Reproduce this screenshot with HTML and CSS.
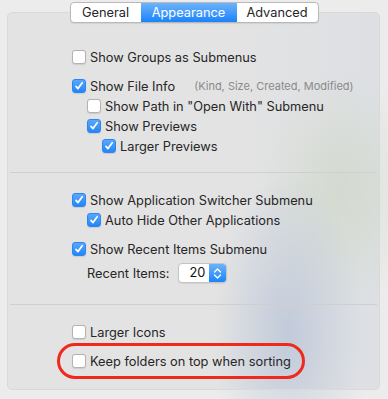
FILE: index.html
```html
<!DOCTYPE html>
<html lang="en">
<head>
  <meta charset="UTF-8">
  <title>Appearance</title>
  <link rel="stylesheet" href="styles.css">
</head>
<body>
  <div class="window">
    <div class="tabs">
      <div class="tab">General</div>
      <div class="tab active">Appearance</div>
      <div class="tab">Advanced</div>
    </div>

    <div class="panel">
      <div class="section first">
        <div class="row gap">
          <span class="box"></span>Show Groups as Submenus
        </div>
        <div class="row">
          <span class="box on"></span>Show File Info
          <span class="hint">(Kind, Size, Created, Modified)</span>
        </div>
        <div class="row lvl1">
          <span class="box"></span>Show Path in "Open With" Submenu
        </div>
        <div class="row lvl1">
          <span class="box on"></span>Show Previews
        </div>
        <div class="row lvl2">
          <span class="box on"></span>Larger Previews
        </div>
      </div>

      <div class="sep"></div>

      <div class="section middle">
        <div class="row">
          <span class="box on"></span>Show Application Switcher Submenu
        </div>
        <div class="row lvl1 gap">
          <span class="box on"></span>Auto Hide Other Applications
        </div>
        <div class="row small-gap">
          <span class="box on"></span>Show Recent Items Submenu
        </div>
        <div class="row lvl1">
          <span class="label">Recent Items:</span>
          <div class="popup">
            <span class="value">20</span>
            <span class="arrows">
              <svg width="9" height="13" viewBox="0 0 9 13">
                <path d="M1.5 5 L4.5 2 L7.5 5 M1.5 8 L4.5 11 L7.5 8" fill="none" stroke="#fff" stroke-width="1.4" stroke-linecap="round" stroke-linejoin="round"/>
              </svg>
            </span>
          </div>
        </div>
      </div>

      <div class="sep"></div>

      <div class="section last">
        <div class="row gap">
          <span class="box"></span>Larger Icons
        </div>
        <div class="row circled">
          <span class="box"></span>Keep folders on top when sorting
          <span class="ring"></span>
        </div>
      </div>
    </div>
  </div>
</body>
</html>
```

FILE: styles.css
```css
* {
  box-sizing: border-box;
}
body {
  margin: 0;
  width: 388px;
  height: 399px;
  font-family: Inter, "Noto Sans", sans-serif;
  font-size: 12.8px;
  color: #262626;
  background:
    radial-gradient(ellipse 80px 170px at 290px 335px, rgba(185,197,217,0.6), rgba(185,197,217,0) 100%),
    radial-gradient(ellipse 90px 120px at 340px 190px, rgba(205,214,196,0.5), rgba(205,214,196,0) 100%),
    #ececec;
  overflow: hidden;
}
.window {
  padding-top: 2px;
}
.tabs {
  display: flex;
  width: 249px;
  height: 21px;
  margin: 0 auto -11px;
  position: relative;
  z-index: 1;
  background: #fff;
  border: 1px solid #b9b9b9;
  border-radius: 4px;
  box-shadow: 0 1px 1px rgba(0,0,0,0.08);
  overflow: hidden;
}
.tab {
  display: flex;
  align-items: center;
  justify-content: center;
  height: 100%;
  border-left: 1px solid #c8c8c8;
}
.tab:nth-child(1) {
  width: 70px;
  border-left: none;
}
.tab:nth-child(2) {
  width: 96px;
}
.tab:nth-child(3) {
  flex: 1;
}
.tab.active {
  color: #fff;
  border-left: none;
  background: linear-gradient(#6db3fb, #1b83fb);
}
.tab.active + .tab {
  border-left: none;
}
.panel {
  margin: 0 8px 0 7px;
  height: 378px;
  border: 1px solid #d9d9d9;
  border-radius: 5px;
  background:
    radial-gradient(ellipse 75px 160px at 280px 320px, rgba(180,193,214,0.7), rgba(180,193,214,0) 100%),
    radial-gradient(ellipse 80px 120px at 332px 178px, rgba(206,214,196,0.65), rgba(206,214,196,0) 100%),
    linear-gradient(90deg, rgba(227,227,227,0) 60%, rgba(215,220,228,0.5) 100%),
    #e3e3e3;
}
.section {
  padding: 17px 0 16px 64px;
}
.section.first {
  padding-top: 34px;
}
.section.middle {
  padding-bottom: 21px;
}
.section.last {
  padding-bottom: 0;
}
.sep {
  height: 1px;
  margin: 0 2px;
  background: #cfcfcf;
}
.row {
  display: flex;
  align-items: center;
  height: 20px;
  white-space: nowrap;
  position: relative;
}
.row.gap {
  margin-bottom: 9px;
}
.row.small-gap {
  margin-bottom: 4px;
}
.lvl1 {
  padding-left: 15px;
}
.lvl2 {
  padding-left: 30px;
}
.box {
  width: 14px;
  height: 14px;
  margin-right: 4px;
  flex: none;
  border: 1px solid #b3b3b3;
  border-radius: 3px;
  background: #fff;
  box-shadow: 0 0.5px 1px rgba(0,0,0,0.1);
}
.box.on {
  border-color: #2b86f2;
  background:
    url("data:image/svg+xml,%3Csvg xmlns='http://www.w3.org/2000/svg' width='12' height='12' viewBox='0 0 12 12'%3E%3Cpath d='M3 6.4 L5 8.6 L9.2 2.8' fill='none' stroke='white' stroke-width='1.7' stroke-linecap='round' stroke-linejoin='round'/%3E%3C/svg%3E") center / 12px 12px no-repeat,
    linear-gradient(#5aa8fb, #2585f7);
}
.hint {
  margin-left: 19px;
  font-size: 11px;
  color: #8a8a8a;
}
.label {
  margin-right: 9px;
}
.popup {
  display: flex;
  height: 20px;
  width: 49px;
  border: 1px solid #c4c4c4;
  border-radius: 4px;
  background: #fff;
  overflow: hidden;
  box-shadow: 0 1px 1px rgba(0,0,0,0.08);
}
.popup .value {
  flex: 1;
  padding-left: 10px;
  line-height: 18px;
  color: #111;
}
.popup .arrows {
  display: flex;
  align-items: center;
  justify-content: center;
  width: 17px;
  background: linear-gradient(#6db3fb, #1b83fb);
}
.ring {
  position: absolute;
  left: -15px;
  top: -8px;
  width: 248px;
  height: 36px;
  border: 3px solid #f0291d;
  border-radius: 18px;
}
```
